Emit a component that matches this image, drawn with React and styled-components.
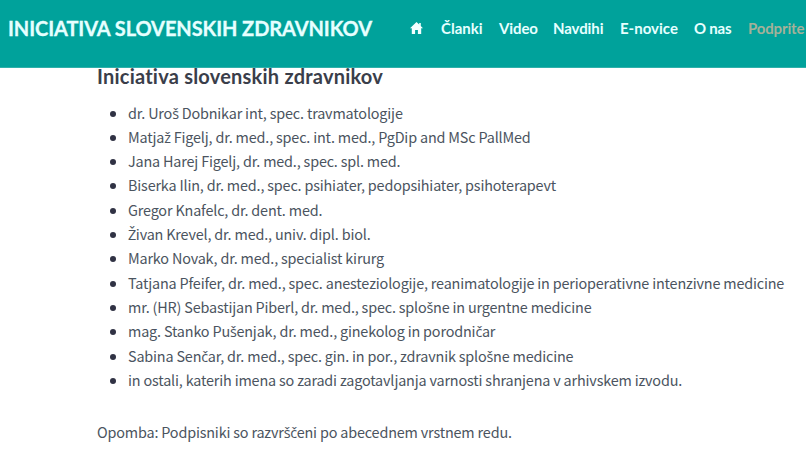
import styled, { createGlobalStyle } from "styled-components";

const GlobalStyle = createGlobalStyle`
    body {
        margin: 0;
        overflow: hidden;
        background-color: #fff;
        color: #4b5460;
        font-family: "Noto Sans CJK SC", "Noto Sans", sans-serif;
        font-size: 14.4px;
    }
`;

const Header = styled.header`
    display: flex;
    align-items: center;
    box-sizing: border-box;
    height: 68px;
    padding: 0 0 11px 8px;
    background-color: #00a29b;
    border-bottom: 1px solid #2fb0aa;
    font-family: Lato, sans-serif;
    font-weight: bold;
    white-space: nowrap;
`;

const Brand = styled.div`
    width: 403px;
    color: #e6ffff;
    font-size: 20px;
    letter-spacing: -0.08px;
    -webkit-text-stroke: 0.3px;
`;

const Nav = styled.nav`
    display: flex;
    align-items: center;
`;

const NavLink = styled.a`
    flex: none;
    width: ${(props) => props.$width}px;
    color: ${(props) => (props.$muted ? "#a5b199" : "#e6ffff")};
    font-size: 15px;
    letter-spacing: ${(props) => props.$tracking || 0}px;
    text-decoration: none;
`;

const HomeIcon = styled.svg`
    display: block;
    width: 13px;
    height: 12px;
    margin-top: -1px;
    fill: #f2ffff;
`;

const Content = styled.main`
    padding-left: 97px;
    white-space: nowrap;
`;

const Title = styled.h2`
    margin: 0;
    color: #3a3e4a;
    font-family: Lato, sans-serif;
    font-size: 20px;
    line-height: 16px;
    letter-spacing: 0.22px;
`;

const SignerList = styled.ul`
    margin: 16.5px 0 0;
    padding: 0 0 0 31px;
`;

const Signer = styled.li`
    height: 24.33px;
    line-height: 24.33px;
    letter-spacing: -0.17px;

    &::marker {
        color: #303244;
    }
`;

const Note = styled.p`
    margin: 27.5px 0 0;
    line-height: 24px;
    letter-spacing: -0.17px;
`;

const Caron = styled.span`
    font-family: "Open Sans", sans-serif;
    line-height: 1;
    letter-spacing: -0.4px;
`;

const links = [
    { label: "Članki", width: 58 },
    { label: "Video", width: 54, tracking: -0.1 },
    { label: "Navdihi", width: 67, tracking: -0.1 },
    { label: "E-novice", width: 74 },
    { label: "O nas", width: 54, tracking: -0.2 },
    { label: "Podprite", width: 58, tracking: -0.15, muted: true },
];

const signers = [
    "dr. Uroš Dobnikar int, spec. travmatologije",
    "Matjaž Figelj, dr. med., spec. int. med., PgDip and MSc PallMed",
    "Jana Harej Figelj, dr. med., spec. spl. med.",
    "Biserka Ilin, dr. med., spec. psihiater, pedopsihiater, psihoterapevt",
    "Gregor Knafelc, dr. dent. med.",
    "Živan Krevel, dr. med., univ. dipl. biol.",
    "Marko Novak, dr. med., specialist kirurg",
    "Tatjana Pfeifer, dr. med., spec. anesteziologije, reanimatologije in perioperativne intenzivne medicine",
    "mr. (HR) Sebastijan Piberl, dr. med., spec. splošne in urgentne medicine",
    "mag. Stanko Pušenjak, dr. med., ginekolog in porodničar",
    "Sabina Senčar, dr. med., spec. gin. in por., zdravnik splošne medicine",
    "in ostali, katerih imena so zaradi zagotavljanja varnosti shranjena v arhivskem izvodu.",
];

const withCarons = (text) =>
    text
        .split(/([čšžČŠŽ])/)
        .map((part, i) => (i % 2 ? <Caron key={i}>{part}</Caron> : part));

const App = () => {
    return (
        <>
            <GlobalStyle />
            <Header>
                <Brand>INICIATIVA SLOVENSKIH ZDRAVNIKOV</Brand>
                <Nav>
                    <NavLink $width={31}>
                        <HomeIcon viewBox="0 0 13 12">
                            <path d="M6.5 0 0 6.2h1.8V12h3.3V8h2.8v4h3.3V6.2H13l-2.2-2.1V1H9.2v1.6Z" />
                        </HomeIcon>
                    </NavLink>
                    {links.map((link) => (
                        <NavLink
                            key={link.label}
                            $width={link.width}
                            $tracking={link.tracking}
                            $muted={link.muted}
                        >
                            {link.label}
                        </NavLink>
                    ))}
                </Nav>
            </Header>
            <Content>
                <Title>Iniciativa slovenskih zdravnikov</Title>
                <SignerList>
                    {signers.map((signer) => (
                        <Signer key={signer}>{withCarons(signer)}</Signer>
                    ))}
                </SignerList>
                <Note>{withCarons("Opomba: Podpisniki so razvrščeni po abecednem vrstnem redu.")}</Note>
            </Content>
        </>
    );
};

export default App;
